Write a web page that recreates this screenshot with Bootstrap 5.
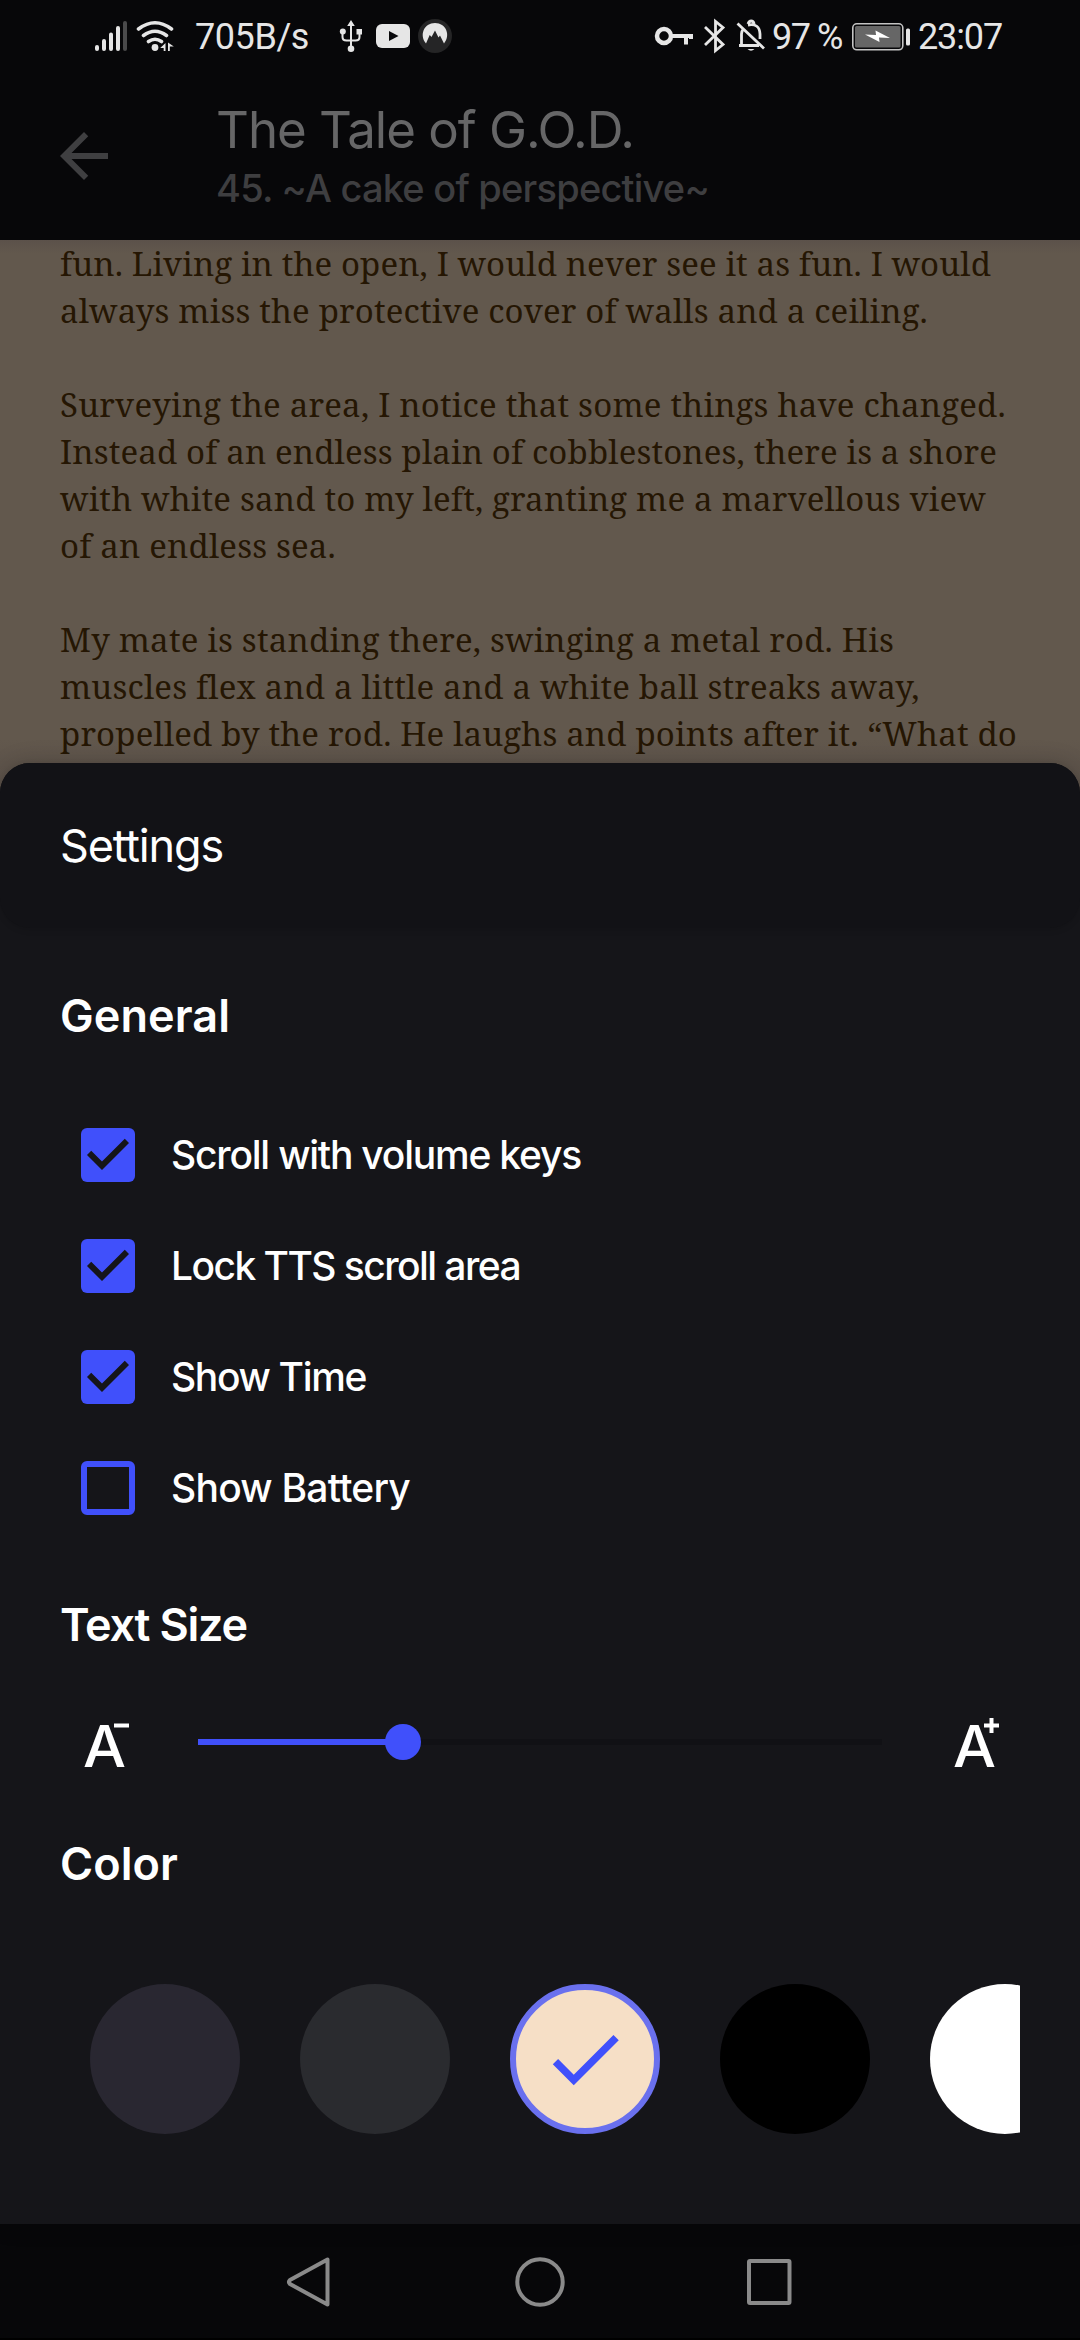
<!DOCTYPE html>
<html lang="en">
<head>
<meta charset="utf-8">
<meta name="viewport" content="width=device-width, initial-scale=1">
<title>Reader settings</title>
<link href="https://cdn.jsdelivr.net/npm/bootstrap@5.3.0/dist/css/bootstrap.min.css" rel="stylesheet">
<style>
html,body{height:100%}
body{width:1080px;height:2340px;overflow:hidden;background:#070709;color:#fff;font-family:Inter,"Open Sans",sans-serif;margin:0}
svg{display:block;flex:none}
.fit{display:inline-block;white-space:nowrap}
.status{height:80px;padding:0 78px 0 95px;font:36px/74px Roboto,sans-serif;color:#e6e6e6}
.status svg{height:74px}
.appbar{height:160px;padding:20px 0 0 60px;background:#070709}
.back{margin:32px 108px 0 0}
.book{font-size:51px;line-height:60px;color:#666667}
.chapter{font-size:38px;line-height:56px;color:#3e3e40;font-weight:500}
.page-text{height:553px;background:linear-gradient(#5b514a 0,#62584d 14px,#62584d 500px,#5e544b 523px,#5c524a 553px);padding:0 60px;color:#251603;font:33px/47px "Noto Serif","DejaVu Serif Condensed","DejaVu Serif",serif}
.page-text p{margin:0 0 47px}
.page-text .fit{display:block;width:max-content}
.sheet{margin-top:-30px;height:1461px;background:#151519;border-radius:30px 30px 0 0;position:relative;box-shadow:0 0 24px rgba(0,0,0,.16)}
.sheet-head{height:165px;background:#121216;border-radius:30px;padding:0 60px;font-size:45px;box-shadow:0 2px 6px rgba(0,0,0,.12)}
.sect{font-size:45px;line-height:48px;font-weight:600;margin:0;padding-left:60px}
.options{margin-top:59.5px}
.opt{height:111px;padding-left:81px;gap:36px;font-size:39px;font-weight:500}
.box{width:54px;height:54px;border:6px solid #4050fb;border-radius:6px}
.size-row{height:92px;padding-left:60px;margin-top:47px}
.size-row svg{overflow:visible}
.track{width:684px;height:6px;background:#111115;margin:0 51px 0 48px;flex:none}
.track-fill{height:6px;background:#4050fb}
.thumb{width:36px;height:36px;border-radius:50%;background:#4050fb;margin:-15px -18px 0 0;flex:none}
.swatches{margin:96px 60px 0 60px;padding-left:30px;gap:60px;overflow:hidden}
.swatch{width:150px;height:150px;border-radius:50%;flex:none}
.picked{background:#f6dfc6;border:6px solid #6a70ee}
.navkeys{height:116px;background:#070709;border-bottom:2px solid #000}
</style>
<script src="https://cdn.jsdelivr.net/npm/bootstrap@5.3.0/dist/js/bootstrap.bundle.min.js"></script>
</head>
<body>
<div class="status d-flex align-items-start justify-content-between">
  <div class="d-flex">
    <svg width="32" viewBox="95 0 32 74" stroke-width="4" stroke-linecap="round" stroke="#e6e6e6"><path d="M97 47v2M104 41v8M111 34.500v14.500M118 28v21"/><path stroke="#4a4a4b" d="M125 23v26"/></svg>
    <svg width="40" viewBox="134 0 40 74" style="margin-left:7px" fill="none" stroke="#e6e6e6" stroke-width="3.600" stroke-linecap="round"><path d="M138.500 29q16.500-12.500 33 0M143.500 35.500q11.500-8.500 23 0M148.500 41.500q6.500-4.500 13 0"/><circle cx="155" cy="47.500" r="3.400" fill="#e6e6e6" stroke="none"/><path d="M165.500 43v8h-1.800v-3h-3.500zM168 42.500v8.500h1.800v-4.500h4z" fill="#e6e6e6" stroke="none"/></svg>
    <span class="fit" data-w="114" style="margin-left:21px">705B/s</span>
    <svg width="24" viewBox="339 0 24 74" style="margin-left:30px" fill="none" stroke="#e6e6e6" stroke-width="2"><path d="M351 24v23M342.500 32v5q0 3.500 4 3.500h9q4 0 4-3.500v-5"/><path fill="#e6e6e6" stroke="none" d="M351 20l3.800 6h-7.600zM356.500 29h5.500v5.500h-5.500z"/><g fill="#e6e6e6" stroke="none"><circle cx="342.800" cy="31.500" r="3"/><circle cx="351" cy="48.800" r="3.300"/></g></svg>
    <svg width="34" viewBox="376 0 34 74" style="margin-left:13px"><rect x="376" y="24" width="34" height="24" rx="6" fill="#e6e6e6"/><path d="M389 31v10l9.500-5z" fill="#09090b"/></svg>
    <svg width="34" viewBox="418 0 34 74" class="ms-2"><circle cx="435" cy="36" r="17" fill="#252526"/><path fill="#e6e6e6" d="M426 43.500C419 35 424 23 435 23s16 12 9 20.500l-4-8-1.500 2-3.500-7-3.500 6.500-1.800-2z"/></svg>
  </div>
  <div class="d-flex">
    <svg width="190" viewBox="578 0 190 74" fill="none" stroke="#e6e6e6" stroke-width="3.500"><circle cx="664" cy="36" r="7" stroke-width="4.500"/><path d="M672 36h21M686 36v8.500M691 36v3" stroke-width="4"/><path d="M705 27l18 17.500-7.500 6v-29l7.500 6L705 45" stroke-width="2.800"/><path d="M737.500 23.500l26.500 25M739 45.500h20M741.500 44V34q0-3 2-5.500M748 25q11.500-2 12 9v5M748 24q1-3 3.200-3t3 3" stroke-width="2.800"/><path d="M747.500 49h7q-3.500 3.500-7 0z" fill="#e6e6e6" stroke="none"/></svg>
    <span class="fit" data-w="70" style="margin-left:4px">97 %</span>
    <svg width="58" viewBox="852 0 58 74" style="margin-left:10px"><rect x="852.800" y="23.800" width="50" height="26" rx="4" fill="none" stroke="#c4c4c4" stroke-width="1.600"/><rect x="855" y="26" width="45.500" height="21.500" rx="1.500" fill="#666"/><path fill="#fff" d="M865 34.500l11 .5-.5-4.500L890 38l-11-.5.500 4.500z"/><rect x="906" y="28.500" width="4" height="17" rx="1.500" fill="#e6e6e6"/></svg>
    <span class="fit" data-w="84" style="margin-left:8px">23:07</span>
  </div>
</div>

<header class="appbar d-flex align-items-start">
  <svg class="back" width="48" height="48" viewBox="4 4 16 16"><path fill="#3f3f41" d="M20 11H7.830l5.590-5.590L12 4l-8 8 8 8 1.410-1.410L7.830 13H20z"/></svg>
  <div>
    <div class="book"><span class="fit" data-w="418">The Tale of G.O.D.</span></div>
    <div class="chapter"><span class="fit" data-w="493">45. ~A cake of perspective~</span></div>
  </div>
</header>

<main class="page-text">
  <p><span class="fit" data-w="931">fun. Living in the open, I would never see it as fun. I would</span><span class="fit" data-w="868">always miss the protective cover of walls and a ceiling.</span></p>
  <p><span class="fit" data-w="946">Surveying the area, I notice that some things have changed.</span><span class="fit" data-w="937">Instead of an endless plain of cobblestones, there is a shore</span><span class="fit" data-w="926">with white sand to my left, granting me a marvellous view</span><span class="fit" data-w="276">of an endless sea.</span></p>
  <p><span class="fit" data-w="834">My mate is standing there, swinging a metal rod. His</span><span class="fit" data-w="859">muscles flex and a little and a white ball streaks away,</span><span class="fit" data-w="957">propelled by the rod. He laughs and points after it. “What do</span></p>
</main>

<section class="sheet">
  <div class="sheet-head d-flex align-items-center"><span class="fit" data-w="163">Settings</span></div>
  <h2 class="sect" style="padding-top:64px"><span class="fit" data-w="170">General</span></h2>
  <div class="options">
    <div class="opt d-flex align-items-center"><svg width="54" height="54" viewBox="3 3 18 18"><rect x="3" y="3" width="18" height="18" rx="2" fill="#4050fb"/><path fill="#151519" d="M10 17l-5-5 1.410-1.410L10 14.170l7.590-7.590L19 8z"/></svg><span class="fit" data-w="410">Scroll with volume keys</span></div>
    <div class="opt d-flex align-items-center"><svg width="54" height="54" viewBox="3 3 18 18"><rect x="3" y="3" width="18" height="18" rx="2" fill="#4050fb"/><path fill="#151519" d="M10 17l-5-5 1.410-1.410L10 14.170l7.590-7.590L19 8z"/></svg><span class="fit" data-w="349">Lock TTS scroll area</span></div>
    <div class="opt d-flex align-items-center"><svg width="54" height="54" viewBox="3 3 18 18"><rect x="3" y="3" width="18" height="18" rx="2" fill="#4050fb"/><path fill="#151519" d="M10 17l-5-5 1.410-1.410L10 14.170l7.590-7.590L19 8z"/></svg><span class="fit" data-w="195">Show Time</span></div>
    <div class="opt d-flex align-items-center"><span class="box"></span><span class="fit" data-w="239">Show Battery</span></div>
  </div>
  <h2 class="sect" style="padding-top:57.5px"><span class="fit" data-w="187">Text Size</span></h2>
  <div class="size-row d-flex align-items-center">
    <svg width="90" height="92" viewBox="60 1696 90 92" fill="#fff"><text x="83" y="1767" font-size="58" font-weight="500" textLength="43" lengthAdjust="spacingAndGlyphs">A</text><path d="M114 1723.500h15v4h-15z"/></svg>
    <div class="track"><div class="track-fill d-flex justify-content-end" style="width:30%"><span class="thumb"></span></div></div>
    <svg width="87" height="92" viewBox="933 1696 87 92" fill="#fff"><text x="953" y="1767" font-size="58" font-weight="500" textLength="43" lengthAdjust="spacingAndGlyphs">A</text><path d="M984 1723.500h5.500v-5.500h4v5.500h5.500v4h-5.500v5.500h-4v-5.500H984z"/></svg>
  </div>
  <h2 class="sect" style="padding-top:52px"><span class="fit" data-w="118">Color</span></h2>
  <div class="swatches d-flex">
    <span class="swatch" style="background:#292731"></span>
    <span class="swatch" style="background:#2a2b2f"></span>
    <span class="swatch picked d-flex align-items-center justify-content-center"><svg width="90" height="90" viewBox="0 0 24 24"><path fill="#4050fb" d="M9 16.170L4.830 12l-1.420 1.410L9 19 21 7l-1.410-1.410z"/></svg></span>
    <span class="swatch" style="background:#000"></span>
    <span class="swatch" style="background:#fff"></span>
  </div>
</section>

<nav class="navkeys d-flex justify-content-center">
  <svg width="520" height="114" viewBox="280 2224 520 114" fill="none" stroke="#8a8a8a" stroke-width="4" stroke-linejoin="round"><path d="M327.500 2259.500v45L290 2284q-2-2 0-4z"/><circle cx="540" cy="2282" r="22.700"/><rect x="749" y="2261" width="40.500" height="42" rx="1"/></svg>
</nav>
<script>
// Track each label so that it fills its designed width.
document.fonts.ready.then(() => {
  document.querySelectorAll('.fit').forEach(el => {
    const gap = (el.dataset.w - el.getBoundingClientRect().width) / el.textContent.length;
    el.style.letterSpacing = gap.toFixed(3) + 'px';
  });
});
</script>
</body>
</html>
